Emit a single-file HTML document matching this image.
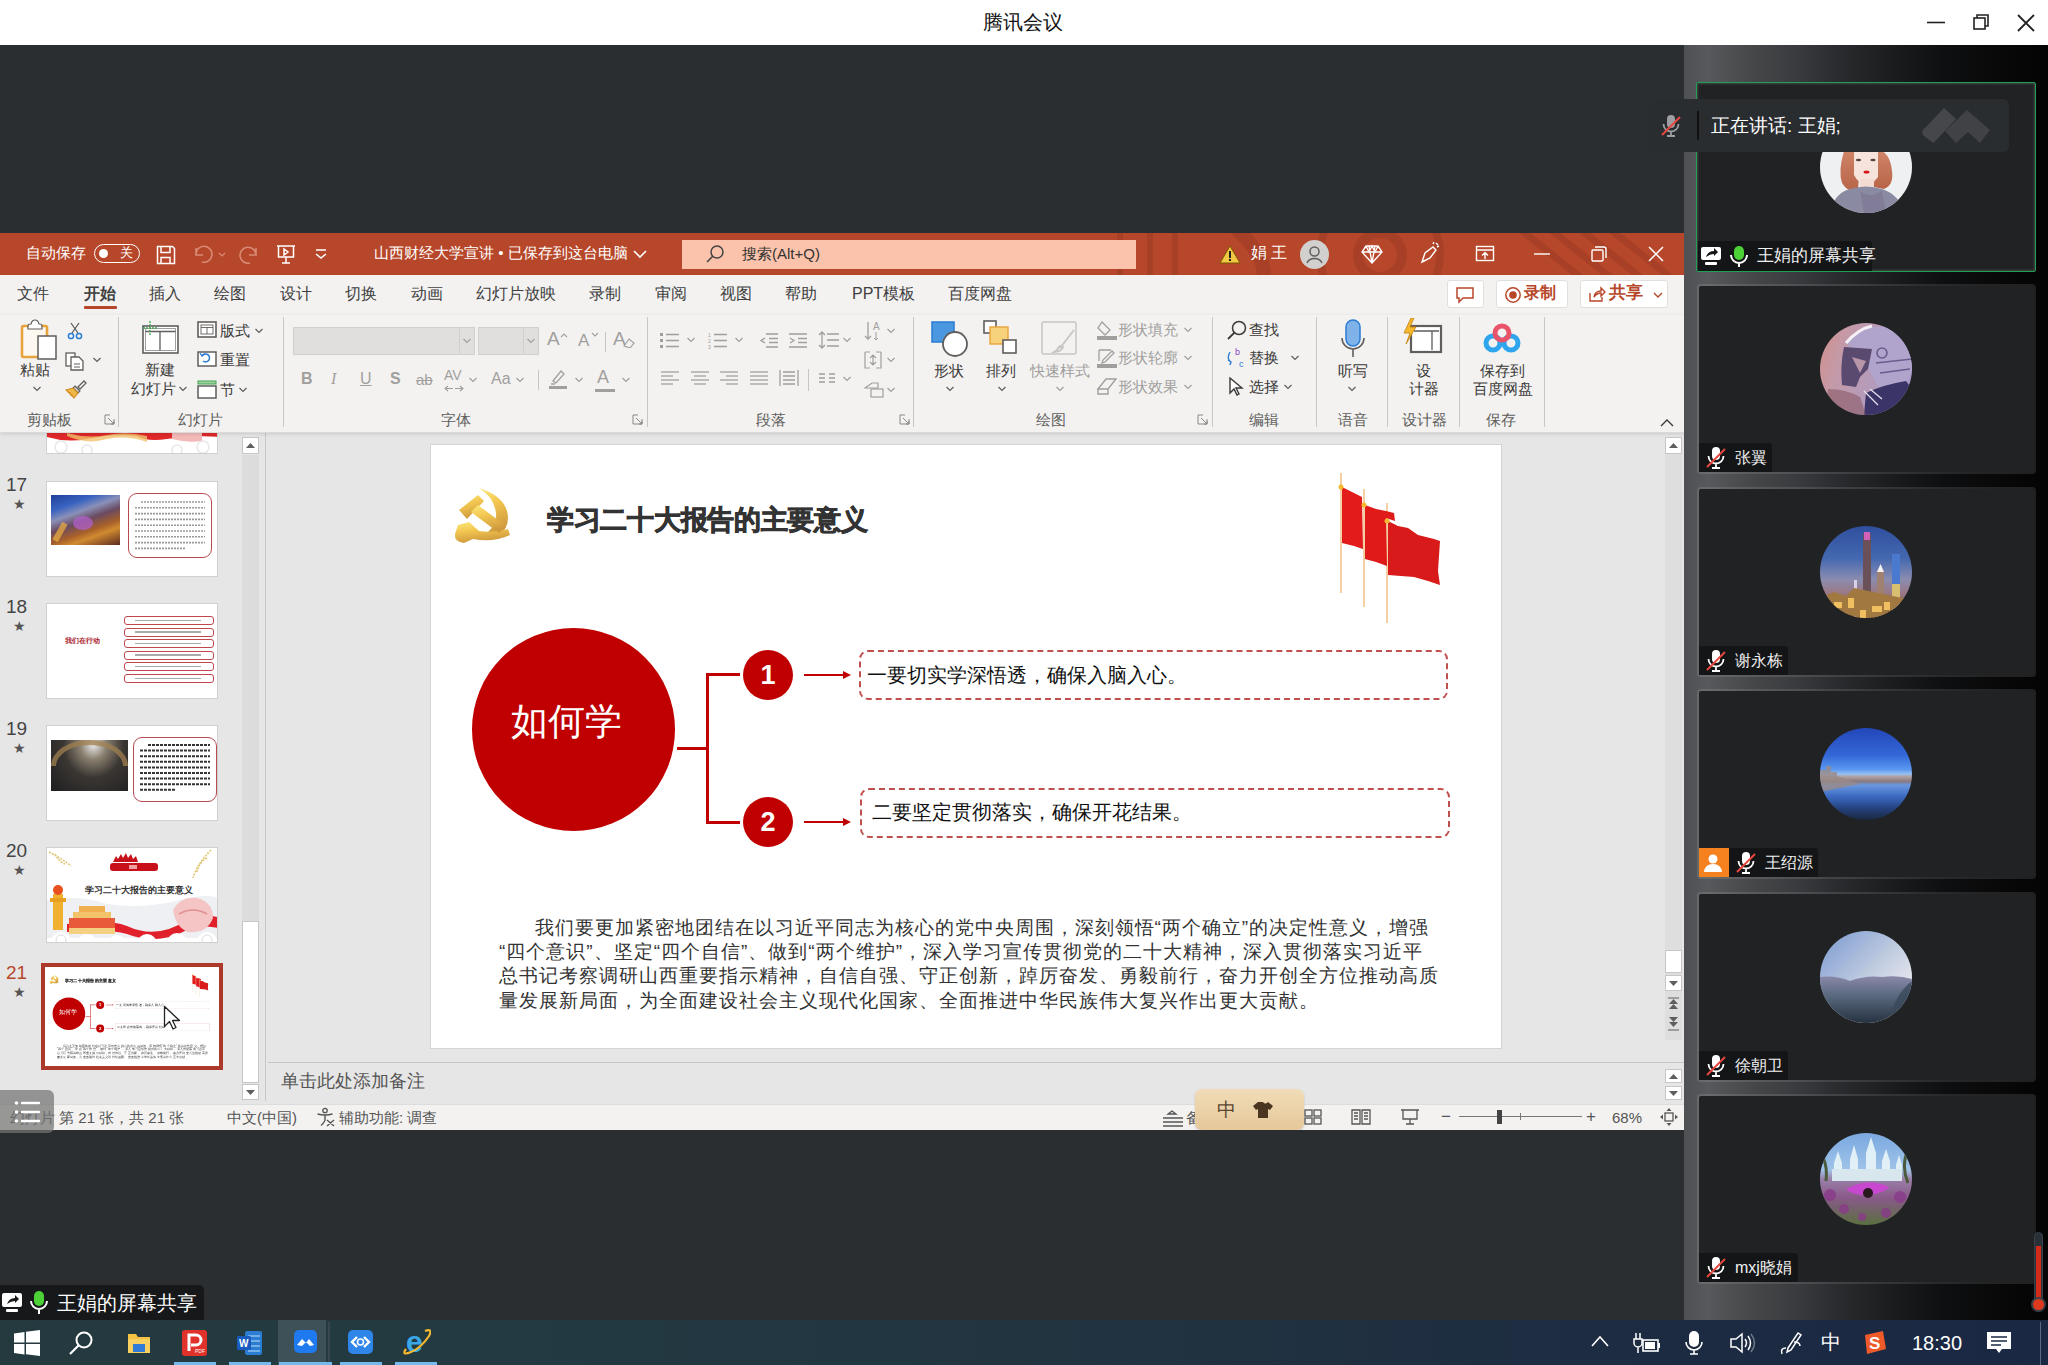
<!DOCTYPE html>
<html><head><meta charset="utf-8">
<style>
*{margin:0;padding:0;box-sizing:border-box}
html,body{width:2048px;height:1365px;overflow:hidden;background:#2b2e31;font-family:"Liberation Sans",sans-serif}
.a{position:absolute}
.t{position:absolute;white-space:nowrap;line-height:1}
#tbar{left:0;top:0;width:2048px;height:45px;background:#fff}
#ppt{left:0;top:233px;width:1684px;height:897px;background:#e6e6e6;overflow:hidden}
#ptitle{left:0;top:0;width:1684px;height:42px;background:#b7472a;overflow:hidden}
#ptabs{left:0;top:42px;width:1684px;height:40px;background:#f3f2f1}
#rib{left:0;top:82px;width:1684px;height:118px;background:#f3f2f1;border-bottom:1px solid #dcdad8;box-shadow:0 1px 4px rgba(0,0,0,.13);z-index:1}
#rpanel{left:1684px;top:45px;width:364px;height:1275px;background:linear-gradient(90deg,#4e5053 0px,#58595c 23px,#454749 68px,#3a3b3e 113px,#2b2d30 149px,#1f2022 194px,#0f1012 256px,#080808 319px,#040404 364px)}
#task{left:0;top:1320px;width:2048px;height:45px;background:linear-gradient(90deg,#243a3f 0%,#233a42 25%,#213340 55%,#1c2a42 85%,#1b2844 100%)}
</style></head><body>
<div id="tbar" class="a">
  <div class="t" style="left:983px;top:12px;font-size:20px;color:#111">腾讯会议</div>
  <svg class="a" style="left:1925px;top:12px" width="22" height="22"><line x1="2" y1="10.5" x2="20" y2="10.5" stroke="#222" stroke-width="1.6"/></svg>
  <svg class="a" style="left:1970px;top:12px" width="22" height="22"><rect x="4" y="6" width="11" height="11" fill="none" stroke="#222" stroke-width="1.6"/><path d="M7 6V3h11v11h-3" fill="none" stroke="#222" stroke-width="1.6"/></svg>
  <svg class="a" style="left:2015px;top:12px" width="22" height="22"><path d="M3 3L19 19M19 3L3 19" stroke="#222" stroke-width="1.8"/></svg>
</div>
<div id="ppt" class="a">
  <div id="ptitle" class="a">
    <svg class="a" style="left:1080px;top:0" width="604" height="42">
      <g fill="none" stroke="#9b3a22" stroke-opacity="0.55">
        <circle cx="300" cy="22" r="22" stroke-width="10"/>
        <circle cx="300" cy="22" r="60" stroke-width="8"/>
        <path d="M150 -10 Q230 60 120 80" stroke-width="14"/>
        <path d="M420 -20 L520 60 M450 -20 L550 60 M480 -20 L580 60 M510 -20 L610 60" stroke-width="7"/>
        <path d="M40 -10 L40 50 M70 -10 L70 50 M95 -10 L95 50" stroke-width="6"/>
      </g>
    </svg>
    <div class="t" style="left:26px;top:12px;font-size:15px;color:#fff">自动保存</div>
    <div class="a" style="left:94px;top:11px;width:46px;height:19px;border:1.5px solid #fff;border-radius:10px"></div>
    <div class="a" style="left:99px;top:16px;width:9px;height:9px;border-radius:50%;background:#fff"></div>
    <div class="t" style="left:120px;top:13px;font-size:13px;color:#fff">关</div>
    <svg class="a" style="left:156px;top:12px" width="20" height="20"><path d="M1.5 1.5h15l2 2v15h-17z M5 1.5v6h9v-6 M5 18.5v-6h9v6" fill="none" stroke="#fff" stroke-width="1.5"/></svg>
    <svg class="a" style="left:192px;top:11px" width="36" height="22"><path d="M4 4v7h7 M4 11 A8 8 0 1 1 10 18" fill="none" stroke="#d98a75" stroke-width="1.6"/><path d="M27 9l3 3 3-3" fill="none" stroke="#d98a75" stroke-width="1.2"/></svg>
    <svg class="a" style="left:238px;top:11px" width="24" height="22"><path d="M18 4v7h-7 M18 11 A8 8 0 1 0 12 19" fill="none" stroke="#d98a75" stroke-width="1.6"/></svg>
    <svg class="a" style="left:276px;top:11px" width="20" height="20"><path d="M1 2h18 M2.5 2v11h15V2 M10 13v6 M6 19h8 M8 5l4 3-4 3z" fill="none" stroke="#fff" stroke-width="1.5"/></svg>
    <svg class="a" style="left:314px;top:14px" width="14" height="14"><path d="M2 3h10 M2 7l5 4 5-4" fill="none" stroke="#fff" stroke-width="1.5"/></svg>
    <div class="t" style="left:374px;top:12px;font-size:15px;color:#fff">山西财经大学宣讲 • 已保存到这台电脑</div>
    <svg class="a" style="left:632px;top:14px" width="16" height="14"><path d="M2 4l6 6 6-6" fill="none" stroke="#fff" stroke-width="1.6"/></svg>
    <div class="a" style="left:682px;top:7px;width:454px;height:29px;background:#fbc3ab"></div>
    <svg class="a" style="left:704px;top:10px" width="22" height="22"><circle cx="13" cy="9" r="6" fill="none" stroke="#444" stroke-width="1.5"/><path d="M9 13L3 19" stroke="#444" stroke-width="1.6"/></svg>
    <div class="t" style="left:742px;top:13px;font-size:15px;color:#333">搜索(Alt+Q)</div>
    <svg class="a" style="left:1219px;top:11px" width="22" height="20"><path d="M11 2L21 19H1z" fill="#f2c744" stroke="#7a5a00" stroke-width="1"/><rect x="10" y="7" width="2" height="7" fill="#222"/><rect x="10" y="15" width="2" height="2" fill="#222"/></svg>
    <div class="t" style="left:1251px;top:12px;font-size:16px;color:#fff">娟 王</div>
    <div class="a" style="left:1300px;top:7px;width:29px;height:29px;border-radius:50%;background:#d2d0ce"></div>
    <svg class="a" style="left:1303px;top:10px" width="23" height="23"><circle cx="11.5" cy="8.5" r="4.5" fill="none" stroke="#605e5c" stroke-width="1.5"/><path d="M4 20 A8 7 0 0 1 19 20" fill="none" stroke="#605e5c" stroke-width="1.5"/></svg>
    <svg class="a" style="left:1361px;top:11px" width="22" height="20"><path d="M5 2h12l4 6-10 11L1 8z M1 8h20 M8 2L11 19 M14 2L11 19 M5 2l3 6 3-6 3 6 3-6" fill="none" stroke="#fff" stroke-width="1.4"/></svg>
    <svg class="a" style="left:1418px;top:9px" width="24" height="24"><path d="M4 20l3-9 8-6 3 3-6 8z M4 20l4-2 M15 2l1-2 M19 5l2-1 M18 1l2 2" fill="none" stroke="#fff" stroke-width="1.4"/></svg>
    <svg class="a" style="left:1475px;top:12px" width="20" height="18"><rect x="1.5" y="1.5" width="17" height="14" fill="none" stroke="#fff" stroke-width="1.4"/><path d="M1.5 5h17 M10 14V8 M7 10.5l3-3 3 3" fill="none" stroke="#fff" stroke-width="1.4"/></svg>
    <svg class="a" style="left:1532px;top:12px" width="20" height="18"><line x1="2" y1="9" x2="18" y2="9" stroke="#fff" stroke-width="1.4"/></svg>
    <svg class="a" style="left:1589px;top:12px" width="20" height="18"><rect x="3" y="5" width="11" height="11" rx="1" fill="none" stroke="#fff" stroke-width="1.4"/><path d="M6 2h9a2 2 0 0 1 2 2v9" fill="none" stroke="#fff" stroke-width="1.4"/></svg>
    <svg class="a" style="left:1646px;top:12px" width="20" height="18"><path d="M3 2l14 14M17 2L3 16" stroke="#fff" stroke-width="1.5"/></svg>
  </div>
  <div id="ptabs" class="a">
    <div class="t" style="left:17px;top:11px;font-size:16px;color:#404040;">文件</div>
    <div class="t" style="left:84px;top:11px;font-size:16px;color:#404040;font-weight:bold;">开始</div>
    <div class="t" style="left:149px;top:11px;font-size:16px;color:#404040;">插入</div>
    <div class="t" style="left:214px;top:11px;font-size:16px;color:#404040;">绘图</div>
    <div class="t" style="left:280px;top:11px;font-size:16px;color:#404040;">设计</div>
    <div class="t" style="left:345px;top:11px;font-size:16px;color:#404040;">切换</div>
    <div class="t" style="left:411px;top:11px;font-size:16px;color:#404040;">动画</div>
    <div class="t" style="left:476px;top:11px;font-size:16px;color:#404040;">幻灯片放映</div>
    <div class="t" style="left:589px;top:11px;font-size:16px;color:#404040;">录制</div>
    <div class="t" style="left:655px;top:11px;font-size:16px;color:#404040;">审阅</div>
    <div class="t" style="left:720px;top:11px;font-size:16px;color:#404040;">视图</div>
    <div class="t" style="left:785px;top:11px;font-size:16px;color:#404040;">帮助</div>
    <div class="t" style="left:852px;top:11px;font-size:16px;color:#404040;">PPT模板</div>
    <div class="t" style="left:948px;top:11px;font-size:16px;color:#404040;">百度网盘</div>
    <div class="a" style="left:84px;top:31px;width:33px;height:3px;background:#b7472a;border-radius:1px"></div>
    <div class="a" style="left:1447px;top:5px;width:37px;height:28px;background:#fff;border:1px solid #e1dfdd;border-radius:3px"></div>
    <svg class="a" style="left:1455px;top:11px" width="20" height="18"><path d="M2 2h16v10H8l-4 4v-4H2z" fill="none" stroke="#b7472a" stroke-width="1.5"/></svg>
    <div class="a" style="left:1496px;top:5px;width:72px;height:28px;background:#fff;border:1px solid #e1dfdd;border-radius:3px"></div>
    <svg class="a" style="left:1504px;top:11px" width="18" height="18"><circle cx="9" cy="9" r="7.2" fill="none" stroke="#b7472a" stroke-width="1.5"/><circle cx="9" cy="9" r="3.8" fill="#b7472a"/></svg>
    <div class="t" style="left:1524px;top:10px;font-size:16px;color:#b7472a;font-weight:bold">录制</div>
    <div class="a" style="left:1580px;top:5px;width:88px;height:28px;background:#fff;border:1px solid #e1dfdd;border-radius:3px"></div>
    <svg class="a" style="left:1588px;top:10px" width="18" height="18"><path d="M2 8v8h12v-4 M6 12 Q7 6 13 6 V3 l4 4-4 4 V8 Q9 8 6 12z" fill="none" stroke="#b7472a" stroke-width="1.4"/></svg>
    <div class="t" style="left:1609px;top:9px;font-size:17px;color:#b7472a;font-weight:bold">共享</div>
    <svg class="a" style="left:1652px;top:15px" width="12" height="10"><path d="M2 3l4 4 4-4" fill="none" stroke="#b7472a" stroke-width="1.4"/></svg>
  </div>
  <div id="rib" class="a">
    <div class="a" style="left:118px;top:2px;width:1px;height:110px;background:#c8c6c4"></div>
    <div class="a" style="left:283px;top:2px;width:1px;height:110px;background:#c8c6c4"></div>
    <div class="a" style="left:647px;top:2px;width:1px;height:110px;background:#c8c6c4"></div>
    <div class="a" style="left:913px;top:2px;width:1px;height:110px;background:#c8c6c4"></div>
    <div class="a" style="left:1212px;top:2px;width:1px;height:110px;background:#c8c6c4"></div>
    <div class="a" style="left:1316px;top:2px;width:1px;height:110px;background:#c8c6c4"></div>
    <div class="a" style="left:1387px;top:2px;width:1px;height:110px;background:#c8c6c4"></div>
    <div class="a" style="left:1459px;top:2px;width:1px;height:110px;background:#c8c6c4"></div>
    <div class="a" style="left:1544px;top:2px;width:1px;height:110px;background:#c8c6c4"></div>
    <div class="t" style="left:27px;top:96.5px;font-size:15px;color:#605e5c;">剪贴板</div>
    <div class="t" style="left:178px;top:96.5px;font-size:15px;color:#605e5c;">幻灯片</div>
    <div class="t" style="left:441px;top:96.5px;font-size:15px;color:#605e5c;">字体</div>
    <div class="t" style="left:756px;top:96.5px;font-size:15px;color:#605e5c;">段落</div>
    <div class="t" style="left:1036px;top:96.5px;font-size:15px;color:#605e5c;">绘图</div>
    <div class="t" style="left:1249px;top:96.5px;font-size:15px;color:#605e5c;">编辑</div>
    <div class="t" style="left:1338px;top:96.5px;font-size:15px;color:#605e5c;">语音</div>
    <div class="t" style="left:1402px;top:96.5px;font-size:15px;color:#605e5c;">设计器</div>
    <div class="t" style="left:1486px;top:96.5px;font-size:15px;color:#605e5c;">保存</div>
    <svg class="a" style="left:104px;top:99px" width="11" height="11"><path d="M1 1h5 M1 1v9h9V5 M4 4l6 6 M10 7v3H7" fill="none" stroke="#8a8886" stroke-width="1"/></svg>
    <svg class="a" style="left:632px;top:99px" width="11" height="11"><path d="M1 1h5 M1 1v9h9V5 M4 4l6 6 M10 7v3H7" fill="none" stroke="#8a8886" stroke-width="1"/></svg>
    <svg class="a" style="left:899px;top:99px" width="11" height="11"><path d="M1 1h5 M1 1v9h9V5 M4 4l6 6 M10 7v3H7" fill="none" stroke="#8a8886" stroke-width="1"/></svg>
    <svg class="a" style="left:1197px;top:99px" width="11" height="11"><path d="M1 1h5 M1 1v9h9V5 M4 4l6 6 M10 7v3H7" fill="none" stroke="#8a8886" stroke-width="1"/></svg>
<svg class="a" style="left:20px;top:4px" width="40" height="42"><rect x="2" y="7" width="25" height="31" rx="1.5" fill="#fdf8ef" stroke="#e8a33d" stroke-width="2.6"/><path d="M8 10V7 Q8 5 11 5 Q12 1 15 1 Q18 1 19 5 Q22 5 22 7v3z" fill="#fff" stroke="#605e5c" stroke-width="1.2"/><rect x="18" y="17" width="18" height="23" fill="#fff" stroke="#605e5c" stroke-width="1.5"/></svg>
    <div class="t" style="left:20px;top:46.5px;font-size:15px;color:#3b3a39;">粘贴</div>
    <svg class="a" style="left:32px;top:70px" width="10" height="8"><path d="M1.5 2l3.5 3.5 3.5-3.5" fill="none" stroke="#605e5c" stroke-width="1.2"/></svg>
    <svg class="a" style="left:66px;top:7px" width="18" height="18"><path d="M5 1l7 10 M13 1L6 11" stroke="#605e5c" stroke-width="1.3" fill="none"/><circle cx="5" cy="14" r="2.6" fill="none" stroke="#2b7cd3" stroke-width="1.5"/><circle cx="13" cy="14" r="2.6" fill="none" stroke="#2b7cd3" stroke-width="1.5"/></svg>
    <svg class="a" style="left:64px;top:36px" width="22" height="20"><rect x="2" y="2" width="9" height="13" fill="#fff" stroke="#605e5c" stroke-width="1.3"/><path d="M7 6h8l4 4v9H7z" fill="#fff" stroke="#605e5c" stroke-width="1.3"/><path d="M10 13h6 M10 16h6" stroke="#605e5c" stroke-width="1"/></svg>
    <svg class="a" style="left:92px;top:41px" width="10" height="8"><path d="M1.5 2l3.5 3.5 3.5-3.5" fill="none" stroke="#605e5c" stroke-width="1.2"/></svg>
    <svg class="a" style="left:65px;top:63px" width="22" height="22"><path d="M13 9l6-6 2 2-6 6z" fill="#fff" stroke="#605e5c" stroke-width="1.3"/><path d="M10 8l5 5-2 2-5-5z" fill="#d0d0d0" stroke="#605e5c" stroke-width="1.1"/><path d="M8 10l5 5-4 5-8-8z" fill="#f0b849" stroke="#d08a1e" stroke-width="1.1"/><path d="M3 14l3 1 M5 17l3 0" stroke="#d08a1e" stroke-width="0.9"/></svg>
<svg class="a" style="left:139px;top:4px" width="42" height="38"><rect x="4" y="7" width="35" height="27" fill="#fff" stroke="#605e5c" stroke-width="1.6"/><rect x="6.5" y="9.5" width="30" height="22" fill="none" stroke="#8a8886" stroke-width="0.8"/><path d="M6.5 12.5h30 M21 12.5v19" stroke="#605e5c" stroke-width="1.3"/><path d="M4 9h14 M11 2v14" stroke="#3fa34d" stroke-width="1.3" stroke-dasharray="2 1"/></svg>
    <div class="t" style="left:145px;top:46.5px;font-size:15px;color:#3b3a39;">新建</div>
    <div class="t" style="left:131px;top:65.5px;font-size:15px;color:#3b3a39;">幻灯片</div>
    <svg class="a" style="left:178px;top:70px" width="10" height="8"><path d="M1.5 2l3.5 3.5 3.5-3.5" fill="none" stroke="#605e5c" stroke-width="1.2"/></svg>
    <svg class="a" style="left:197px;top:6px" width="20" height="18"><rect x="1" y="1" width="18" height="15" fill="#fff" stroke="#605e5c" stroke-width="1.6"/><rect x="4" y="4" width="12" height="9" fill="none" stroke="#605e5c" stroke-width="0.9"/><path d="M4 6.5h12 M10 6.5v6.5" stroke="#605e5c" stroke-width="0.9"/></svg>
    <div class="t" style="left:220px;top:7.5px;font-size:15px;color:#3b3a39;">版式</div>
    <svg class="a" style="left:254px;top:12px" width="10" height="8"><path d="M1.5 2l3.5 3.5 3.5-3.5" fill="none" stroke="#605e5c" stroke-width="1.2"/></svg>
    <svg class="a" style="left:197px;top:35px" width="20" height="18"><rect x="1" y="2" width="18" height="14" fill="#fff" stroke="#605e5c" stroke-width="1.5"/><path d="M5 6 A4 4 0 1 1 6 11" fill="none" stroke="#2b7cd3" stroke-width="1.5"/><path d="M3 3l2 3 3-2" fill="none" stroke="#2b7cd3" stroke-width="1.3"/></svg>
    <div class="t" style="left:220px;top:36.5px;font-size:15px;color:#3b3a39;">重置</div>
    <svg class="a" style="left:197px;top:65px" width="20" height="19"><rect x="1" y="1" width="18" height="3" fill="#9fd4a3" stroke="#3fa34d" stroke-width="1"/><rect x="1" y="6" width="18" height="12" fill="#fff" stroke="#605e5c" stroke-width="1.5"/></svg>
    <div class="t" style="left:220px;top:66.5px;font-size:15px;color:#3b3a39;">节</div>
    <svg class="a" style="left:238px;top:71px" width="10" height="8"><path d="M1.5 2l3.5 3.5 3.5-3.5" fill="none" stroke="#605e5c" stroke-width="1.2"/></svg>
    <div class="a" style="left:293px;top:12px;width:182px;height:28px;background:#e1dfdd;border:1px solid #d2d0ce"></div>
    <div class="a" style="left:459px;top:12px;width:1px;height:28px;background:#d2d0ce"></div>
    <svg class="a" style="left:462px;top:22px" width="10" height="8"><path d="M1.5 2l3.5 3.5 3.5-3.5" fill="none" stroke="#a19f9d" stroke-width="1.2"/></svg>
    <div class="a" style="left:478px;top:12px;width:61px;height:28px;background:#e1dfdd;border:1px solid #d2d0ce"></div>
    <div class="a" style="left:523px;top:12px;width:1px;height:28px;background:#d2d0ce"></div>
    <svg class="a" style="left:526px;top:22px" width="10" height="8"><path d="M1.5 2l3.5 3.5 3.5-3.5" fill="none" stroke="#a19f9d" stroke-width="1.2"/></svg>
    <div class="t" style="left:547px;top:13.5px;font-size:19px;color:#a19f9d;">A</div>
    <svg class="a" style="left:560px;top:17px" width="8" height="6"><path d="M1 5l3-3 3 3" fill="none" stroke="#a19f9d" stroke-width="1.1"/></svg>
    <div class="t" style="left:578px;top:16.5px;font-size:17px;color:#a19f9d;">A</div>
    <svg class="a" style="left:591px;top:17px" width="8" height="6"><path d="M1 1l3 3 3-3" fill="none" stroke="#a19f9d" stroke-width="1.1"/></svg>
    <div class="a" style="left:605px;top:17px;width:1px;height:20px;background:#c8c6c4"></div>
    <div class="t" style="left:613px;top:13.5px;font-size:19px;color:#a19f9d;">A</div>
    <svg class="a" style="left:622px;top:21px" width="14" height="12"><path d="M2 10l5-7 5 4-4 5z" fill="none" stroke="#a19f9d" stroke-width="1.2"/></svg>
    <div class="t" style="left:301px;top:56.0px;font-size:16px;color:#a19f9d;font-weight:bold">B</div>
    <div class="t" style="left:331px;top:56.0px;font-size:16px;color:#a19f9d;font-style:italic;font-family:Liberation Serif">I</div>
    <div class="t" style="left:360px;top:56.0px;font-size:16px;color:#a19f9d;text-decoration:underline">U</div>
    <div class="t" style="left:390px;top:56.0px;font-size:16px;color:#a19f9d;font-weight:bold">S</div>
    <div class="t" style="left:416px;top:56.5px;font-size:15px;color:#a19f9d;text-decoration:line-through">ab</div>
    <div class="t" style="left:444px;top:53.0px;font-size:14px;color:#a19f9d;">AV</div>
    <svg class="a" style="left:444px;top:70px" width="20" height="7"><path d="M1 3.5h18 M4 1l-3 2.5 3 2.5 M16 1l3 2.5-3 2.5" fill="none" stroke="#a19f9d" stroke-width="1.1"/><path d="M10 0v7" stroke="#f3f2f1" stroke-width="2"/></svg>
    <svg class="a" style="left:468px;top:61px" width="10" height="8"><path d="M1.5 2l3.5 3.5 3.5-3.5" fill="none" stroke="#a19f9d" stroke-width="1.2"/></svg>
    <div class="t" style="left:491px;top:56.0px;font-size:16px;color:#a19f9d;">Aa</div>
    <svg class="a" style="left:515px;top:61px" width="10" height="8"><path d="M1.5 2l3.5 3.5 3.5-3.5" fill="none" stroke="#a19f9d" stroke-width="1.2"/></svg>
    <div class="a" style="left:538px;top:55px;width:1px;height:20px;background:#c8c6c4"></div>
    <svg class="a" style="left:548px;top:53px" width="20" height="22"><path d="M5 13l8-10 3 3-8 9z M3 16h4" fill="none" stroke="#a19f9d" stroke-width="1.3"/><rect x="1" y="18" width="18" height="3" fill="#a19f9d"/></svg>
    <svg class="a" style="left:574px;top:61px" width="10" height="8"><path d="M1.5 2l3.5 3.5 3.5-3.5" fill="none" stroke="#a19f9d" stroke-width="1.2"/></svg>
    <div class="t" style="left:597px;top:53.0px;font-size:18px;color:#a19f9d;">A</div>
    <div class="a" style="left:595px;top:74px;width:20px;height:3px;background:#a19f9d"></div>
    <svg class="a" style="left:621px;top:61px" width="10" height="8"><path d="M1.5 2l3.5 3.5 3.5-3.5" fill="none" stroke="#a19f9d" stroke-width="1.2"/></svg>
    <svg class="a" style="left:660px;top:17px" width="20" height="16"><rect x="0" y="1" width="3" height="3" fill="#a19f9d"/><rect x="0" y="7" width="3" height="3" fill="#a19f9d"/><rect x="0" y="13" width="3" height="3" fill="#a19f9d"/><path d="M6 2.5h13 M6 8.5h13 M6 14.5h13" stroke="#a19f9d" stroke-width="1.3"/></svg>
    <svg class="a" style="left:686px;top:21px" width="10" height="8"><path d="M1.5 2l3.5 3.5 3.5-3.5" fill="none" stroke="#a19f9d" stroke-width="1.2"/></svg>
    <svg class="a" style="left:708px;top:17px" width="20" height="17"><text x="0" y="5" font-size="5" fill="#a19f9d">1</text><text x="0" y="11" font-size="5" fill="#a19f9d">2</text><text x="0" y="17" font-size="5" fill="#a19f9d">3</text><path d="M6 2.5h13 M6 8.5h13 M6 14.5h13" stroke="#a19f9d" stroke-width="1.3"/></svg>
    <svg class="a" style="left:734px;top:21px" width="10" height="8"><path d="M1.5 2l3.5 3.5 3.5-3.5" fill="none" stroke="#a19f9d" stroke-width="1.2"/></svg>
    <svg class="a" style="left:759px;top:17px" width="20" height="17"><path d="M7 2h12 M10 6.5h9 M10 10.5h9 M7 15h12 M6 6l-4 2.5 4 2.5" fill="none" stroke="#a19f9d" stroke-width="1.3"/></svg>
    <svg class="a" style="left:788px;top:17px" width="20" height="17"><path d="M1 2h18 M10 6.5h9 M10 10.5h9 M1 15h18 M2 6l4 2.5-4 2.5" fill="none" stroke="#a19f9d" stroke-width="1.3"/></svg>
    <svg class="a" style="left:818px;top:16px" width="22" height="18"><path d="M9 3h12 M9 9h12 M9 15h12 M4 1v16 M1 4l3-3 3 3 M1 14l3 3 3-3" fill="none" stroke="#a19f9d" stroke-width="1.3"/></svg>
    <svg class="a" style="left:842px;top:21px" width="10" height="8"><path d="M1.5 2l3.5 3.5 3.5-3.5" fill="none" stroke="#a19f9d" stroke-width="1.2"/></svg>
    <svg class="a" style="left:864px;top:5px" width="18" height="22"><path d="M4 2v17 M1 16l3 3 3-3" fill="none" stroke="#a19f9d" stroke-width="1.3"/><text x="9" y="10" font-size="10" fill="#a19f9d">A</text><path d="M12 12v8 M10 18l2 2 2-2" fill="none" stroke="#a19f9d" stroke-width="1"/></svg>
    <svg class="a" style="left:886px;top:12px" width="10" height="8"><path d="M1.5 2l3.5 3.5 3.5-3.5" fill="none" stroke="#a19f9d" stroke-width="1.2"/></svg>
    <svg class="a" style="left:864px;top:36px" width="18" height="18"><path d="M1 1h5 M1 1v16h5 M17 1h-5 M17 1v16h-5 M9 4v10 M6 7l3-3 3 3 M6 11l3 3 3-3" fill="none" stroke="#a19f9d" stroke-width="1.2"/></svg>
    <svg class="a" style="left:886px;top:41px" width="10" height="8"><path d="M1.5 2l3.5 3.5 3.5-3.5" fill="none" stroke="#a19f9d" stroke-width="1.2"/></svg>
    <svg class="a" style="left:864px;top:67px" width="20" height="16"><path d="M1 6l7-5h6v5z" fill="none" stroke="#a19f9d" stroke-width="1.2"/><rect x="7" y="7" width="12" height="8" fill="none" stroke="#a19f9d" stroke-width="1.2"/></svg>
    <svg class="a" style="left:886px;top:71px" width="10" height="8"><path d="M1.5 2l3.5 3.5 3.5-3.5" fill="none" stroke="#a19f9d" stroke-width="1.2"/></svg>
    <svg class="a" style="left:661.0px;top:56px" width="18" height="18"><line x1="0" y1="1" x2="18" y2="1" stroke="#a19f9d" stroke-width="1.3"/><line x1="0" y1="5" x2="12" y2="5" stroke="#a19f9d" stroke-width="1.3"/><line x1="0" y1="9" x2="18" y2="9" stroke="#a19f9d" stroke-width="1.3"/><line x1="0" y1="13" x2="12" y2="13" stroke="#a19f9d" stroke-width="1.3"/></svg>
    <svg class="a" style="left:690.5px;top:56px" width="18" height="18"><line x1="0" y1="1" x2="18" y2="1" stroke="#a19f9d" stroke-width="1.3"/><line x1="3" y1="5" x2="15" y2="5" stroke="#a19f9d" stroke-width="1.3"/><line x1="0" y1="9" x2="18" y2="9" stroke="#a19f9d" stroke-width="1.3"/><line x1="3" y1="13" x2="15" y2="13" stroke="#a19f9d" stroke-width="1.3"/></svg>
    <svg class="a" style="left:720.0px;top:56px" width="18" height="18"><line x1="0" y1="1" x2="18" y2="1" stroke="#a19f9d" stroke-width="1.3"/><line x1="6" y1="5" x2="18" y2="5" stroke="#a19f9d" stroke-width="1.3"/><line x1="0" y1="9" x2="18" y2="9" stroke="#a19f9d" stroke-width="1.3"/><line x1="6" y1="13" x2="18" y2="13" stroke="#a19f9d" stroke-width="1.3"/></svg>
    <svg class="a" style="left:749.5px;top:56px" width="18" height="18"><line x1="0" y1="1" x2="18" y2="1" stroke="#a19f9d" stroke-width="1.3"/><line x1="0" y1="5" x2="18" y2="5" stroke="#a19f9d" stroke-width="1.3"/><line x1="0" y1="9" x2="18" y2="9" stroke="#a19f9d" stroke-width="1.3"/><line x1="0" y1="13" x2="18" y2="13" stroke="#a19f9d" stroke-width="1.3"/></svg>
    <svg class="a" style="left:779px;top:54px" width="20" height="18"><path d="M1 1v16 M19 1v16 M4 3h12 M4 7h12 M4 11h12 M4 15h12" fill="none" stroke="#a19f9d" stroke-width="1.3"/></svg>
    <div class="a" style="left:808px;top:54px;width:1px;height:22px;background:#c8c6c4"></div>
    <svg class="a" style="left:818px;top:57px" width="18" height="12"><path d="M1 2h6 M1 6h6 M1 10h6 M11 2h6 M11 6h6 M11 10h6" stroke="#a19f9d" stroke-width="1.3"/></svg>
    <svg class="a" style="left:842px;top:60px" width="10" height="8"><path d="M1.5 2l3.5 3.5 3.5-3.5" fill="none" stroke="#a19f9d" stroke-width="1.2"/></svg>
    <svg class="a" style="left:930px;top:4px" width="40" height="40"><rect x="2" y="3" width="22" height="20" fill="#4b97e0" stroke="#2b7cd3" stroke-width="1.5"/><circle cx="25" cy="25" r="12" fill="#fff" stroke="#605e5c" stroke-width="1.8"/></svg>
    <div class="t" style="left:934px;top:47.5px;font-size:15px;color:#3b3a39;">形状</div>
    <svg class="a" style="left:945px;top:70px" width="10" height="8"><path d="M1.5 2l3.5 3.5 3.5-3.5" fill="none" stroke="#605e5c" stroke-width="1.2"/></svg>
    <svg class="a" style="left:982px;top:4px" width="38" height="40"><rect x="2" y="2" width="12" height="12" fill="#fff" stroke="#605e5c" stroke-width="1.6"/><rect x="8" y="8" width="18" height="17" fill="#f6d27a" stroke="#e8a33d" stroke-width="1.4"/><rect x="21" y="21" width="13" height="13" fill="#fff" stroke="#605e5c" stroke-width="1.6"/></svg>
    <div class="t" style="left:986px;top:47.5px;font-size:15px;color:#3b3a39;">排列</div>
    <svg class="a" style="left:997px;top:70px" width="10" height="8"><path d="M1.5 2l3.5 3.5 3.5-3.5" fill="none" stroke="#605e5c" stroke-width="1.2"/></svg>
    <svg class="a" style="left:1040px;top:5px" width="40" height="38"><rect x="2" y="2" width="34" height="32" rx="2" fill="#f3f2f1" stroke="#c8c6c4" stroke-width="1.5"/><path d="M34 10L20 28 M17 30 q3-6 6-3 q-2 5-9 5z" fill="none" stroke="#c8c6c4" stroke-width="2"/></svg>
    <div class="t" style="left:1030px;top:47.5px;font-size:15px;color:#a19f9d;">快速样式</div>
    <svg class="a" style="left:1055px;top:70px" width="10" height="8"><path d="M1.5 2l3.5 3.5 3.5-3.5" fill="none" stroke="#a19f9d" stroke-width="1.2"/></svg>
    <svg class="a" style="left:1096px;top:4px" width="22" height="22"><path d="M6 3l8 8-5 5-7-7z" fill="none" stroke="#a19f9d" stroke-width="1.3"/><rect x="1" y="17" width="20" height="4" fill="#a19f9d"/></svg>
    <div class="t" style="left:1118px;top:6.5px;font-size:15px;color:#a19f9d;">形状填充</div>
    <svg class="a" style="left:1183px;top:11px" width="10" height="8"><path d="M1.5 2l3.5 3.5 3.5-3.5" fill="none" stroke="#a19f9d" stroke-width="1.2"/></svg>
    <svg class="a" style="left:1096px;top:32px" width="22" height="22"><path d="M3 3h12 M3 3v11 M16 4l-9 9-1 3 3-1 9-9z" fill="none" stroke="#a19f9d" stroke-width="1.3"/><rect x="1" y="17" width="20" height="4" fill="#a19f9d"/></svg>
    <div class="t" style="left:1118px;top:34.5px;font-size:15px;color:#a19f9d;">形状轮廓</div>
    <svg class="a" style="left:1183px;top:39px" width="10" height="8"><path d="M1.5 2l3.5 3.5 3.5-3.5" fill="none" stroke="#a19f9d" stroke-width="1.2"/></svg>
    <svg class="a" style="left:1096px;top:61px" width="22" height="20"><path d="M2 13l8-10h10l-8 10z M2 13v5h10v-5" fill="none" stroke="#a19f9d" stroke-width="1.4"/></svg>
    <div class="t" style="left:1118px;top:63.5px;font-size:15px;color:#a19f9d;">形状效果</div>
    <svg class="a" style="left:1183px;top:68px" width="10" height="8"><path d="M1.5 2l3.5 3.5 3.5-3.5" fill="none" stroke="#a19f9d" stroke-width="1.2"/></svg>
    <svg class="a" style="left:1226px;top:5px" width="22" height="20"><circle cx="13" cy="8" r="6.5" fill="none" stroke="#3b3a39" stroke-width="1.5"/><path d="M8.5 12.5L2 19" stroke="#3b3a39" stroke-width="1.8"/></svg>
    <div class="t" style="left:1249px;top:6.5px;font-size:15px;color:#3b3a39;">查找</div>
    <svg class="a" style="left:1224px;top:32px" width="24" height="22"><text x="11" y="8" font-size="9" fill="#8f3fc2">b</text><text x="15" y="20" font-size="9" fill="#2b7cd3">c</text><path d="M6 5 Q2 12 7 15 M4 13l3 2-1 3" fill="none" stroke="#2b7cd3" stroke-width="1.4"/></svg>
    <div class="t" style="left:1249px;top:34.5px;font-size:15px;color:#3b3a39;">替换</div>
    <svg class="a" style="left:1290px;top:39px" width="10" height="8"><path d="M1.5 2l3.5 3.5 3.5-3.5" fill="none" stroke="#605e5c" stroke-width="1.2"/></svg>
    <svg class="a" style="left:1228px;top:62px" width="18" height="20"><path d="M2 1v15l4-4 3 6 2-1-3-6h6z" fill="#fff" stroke="#3b3a39" stroke-width="1.4"/></svg>
    <div class="t" style="left:1249px;top:63.5px;font-size:15px;color:#3b3a39;">选择</div>
    <svg class="a" style="left:1283px;top:68px" width="10" height="8"><path d="M1.5 2l3.5 3.5 3.5-3.5" fill="none" stroke="#605e5c" stroke-width="1.2"/></svg>
    <svg class="a" style="left:1340px;top:3px" width="26" height="42"><rect x="6" y="2" width="14" height="26" rx="7" fill="#7fb2e9" stroke="#2b7cd3" stroke-width="1.5"/><path d="M2 20 A11 11 0 0 0 24 20 M13 31v8" fill="none" stroke="#605e5c" stroke-width="1.6"/></svg>
    <div class="t" style="left:1338px;top:47.5px;font-size:15px;color:#3b3a39;">听写</div>
    <svg class="a" style="left:1347px;top:70px" width="10" height="8"><path d="M1.5 2l3.5 3.5 3.5-3.5" fill="none" stroke="#605e5c" stroke-width="1.2"/></svg>
    <svg class="a" style="left:1402px;top:3px" width="42" height="38"><rect x="9" y="8" width="30" height="26" fill="#fff" stroke="#605e5c" stroke-width="2.2"/><path d="M12 13h25 M30 13v19" stroke="#605e5c" stroke-width="1.3"/><path d="M9 0L2 15h6L4 26 14 9H8l4-9z" fill="#f5b82e" stroke="#c47e0e" stroke-width="0.8"/></svg>
    <div class="t" style="left:1416px;top:47.5px;font-size:15px;color:#3b3a39;">设</div>
    <div class="t" style="left:1409px;top:65.5px;font-size:15px;color:#3b3a39;">计器</div>
<svg class="a" style="left:1482px;top:8px" width="40" height="32"><circle cx="11" cy="20" r="7" fill="none" stroke="#2fa5ee" stroke-width="5"/><circle cx="29" cy="20" r="7" fill="none" stroke="#2fa5ee" stroke-width="5"/><circle cx="20" cy="10" r="7" fill="none" stroke="#e9546b" stroke-width="5"/></svg>
    <div class="t" style="left:1480px;top:47.5px;font-size:15px;color:#3b3a39;">保存到</div>
    <div class="t" style="left:1473px;top:65.5px;font-size:15px;color:#3b3a39;">百度网盘</div>
    <svg class="a" style="left:1659px;top:103px" width="16" height="10"><path d="M2 8l6-6 6 6" fill="none" stroke="#3b3a39" stroke-width="1.4"/></svg>
  </div>
<div class="a" style="left:265px;top:200px;width:1px;height:668px;background:#c8c6c4"></div>
<div class="a" style="left:242px;top:204px;width:17px;height:17px;background:#fff;border:1px solid #c8c6c4"></div>
<svg class="a" style="left:242px;top:204px" width="17" height="17"><path d="M4 11l4.5-5 4.5 5z" fill="#605e5c"/></svg>
<div class="a" style="left:242px;top:222px;width:17px;height:466px;background:#dcdcdc"></div>
<div class="a" style="left:242px;top:688px;width:17px;height:162px;background:#fff;border:1px solid #c8c6c4"></div>
<div class="a" style="left:242px;top:851px;width:17px;height:16px;background:#fff;border:1px solid #c8c6c4"></div>
<svg class="a" style="left:242px;top:851px" width="17" height="16"><path d="M4 6l4.5 5 4.5-5z" fill="#605e5c"/></svg>
<div class="a" style="left:46px;top:200px;width:172px;height:21px;background:#fff;border:1px solid #d0d0d0;border-top:none;overflow:hidden">
<svg class="a" style="left:0;top:0" width="172" height="21"><path d="M0 0h172v4 Q150 2 120 6 Q100 9 90 3 Q70 0 40 6 Q20 10 0 4z" fill="#e0282a"/><path d="M20 3 Q40 12 60 6 Q80 2 100 9 L100 3 Q80 -2 60 2 Q40 6 20 0z" fill="#f2c36b" opacity=".8"/><path d="M125 0h30v8 Q140 10 125 6z" fill="#f3b9b9"/>
<g fill="none" stroke="#e8e8e8" stroke-width="1.5"><circle cx="14" cy="14" r="6"/><circle cx="156" cy="14" r="6"/><circle cx="40" cy="17" r="5"/><circle cx="130" cy="17" r="5"/></g></svg></div>
<div class="t" style="left:6px;top:242px;font-size:19px;color:#444">17</div>
<div class="t" style="left:13px;top:264px;font-size:14px;color:#555">★</div>
<div class="a" style="left:46px;top:248px;width:172px;height:96px;background:#fff;border:1px solid #d0d0d0;overflow:hidden">
<div class="a" style="left:4px;top:13px;width:69px;height:50px;background:linear-gradient(160deg,#1f3f9a 0%,#3a64c0 22%,#8a90b8 36%,#6a4a60 50%,#a8602a 66%,#d08a30 76%,#5a2a20 100%)"></div>
<div class="a" style="left:26px;top:34px;width:20px;height:14px;border-radius:50%;background:#b060c8;opacity:.75"></div><div class="a" style="left:10px;top:40px;width:6px;height:20px;background:#f0b040;opacity:.7;transform:rotate(30deg)"></div>
<div class="a" style="left:81px;top:11px;width:84px;height:65px;border:1.6px solid #b84a52;border-radius:9px"></div>
<svg class="a" style="left:88px;top:18px" width="72" height="52"><line x1="6" y1="2.0" x2="70" y2="2.0" stroke="#9a9a9a" stroke-width="1.6" stroke-dasharray="2 1"/><line x1="0" y1="7.8" x2="70" y2="7.8" stroke="#9a9a9a" stroke-width="1.6" stroke-dasharray="2 1"/><line x1="0" y1="13.6" x2="70" y2="13.6" stroke="#9a9a9a" stroke-width="1.6" stroke-dasharray="2 1"/><line x1="0" y1="19.4" x2="70" y2="19.4" stroke="#9a9a9a" stroke-width="1.6" stroke-dasharray="2 1"/><line x1="0" y1="25.2" x2="70" y2="25.2" stroke="#9a9a9a" stroke-width="1.6" stroke-dasharray="2 1"/><line x1="0" y1="31.0" x2="70" y2="31.0" stroke="#9a9a9a" stroke-width="1.6" stroke-dasharray="2 1"/><line x1="0" y1="36.8" x2="70" y2="36.8" stroke="#9a9a9a" stroke-width="1.6" stroke-dasharray="2 1"/><line x1="0" y1="42.6" x2="70" y2="42.6" stroke="#9a9a9a" stroke-width="1.6" stroke-dasharray="2 1"/><line x1="0" y1="48.4" x2="50" y2="48.4" stroke="#9a9a9a" stroke-width="1.6" stroke-dasharray="2 1"/></svg>
</div>
<div class="t" style="left:6px;top:364px;font-size:19px;color:#444">18</div>
<div class="t" style="left:13px;top:386px;font-size:14px;color:#555">★</div>
<div class="a" style="left:46px;top:370px;width:172px;height:96px;background:#fff;border:1px solid #d0d0d0;overflow:hidden">
<div class="t" style="left:18px;top:33px;font-size:7px;color:#a8202a;font-weight:bold">我们在行动</div><div class="a" style="left:77px;top:12.0px;width:90px;height:9px;border:1.6px solid #c0474e;border-radius:3px"><div class="a" style="left:10px;top:2.5px;width:66px;height:1.5px;background:#aaa"></div></div><div class="a" style="left:77px;top:23.6px;width:90px;height:9px;border:1.6px solid #c0474e;border-radius:3px"><div class="a" style="left:10px;top:2.5px;width:66px;height:1.5px;background:#aaa"></div></div><div class="a" style="left:77px;top:35.2px;width:90px;height:9px;border:1.6px solid #c0474e;border-radius:3px"><div class="a" style="left:10px;top:2.5px;width:66px;height:1.5px;background:#aaa"></div></div><div class="a" style="left:77px;top:46.8px;width:90px;height:9px;border:1.6px solid #c0474e;border-radius:3px"><div class="a" style="left:10px;top:2.5px;width:66px;height:1.5px;background:#aaa"></div></div><div class="a" style="left:77px;top:58.4px;width:90px;height:9px;border:1.6px solid #c0474e;border-radius:3px"><div class="a" style="left:10px;top:2.5px;width:66px;height:1.5px;background:#aaa"></div></div><div class="a" style="left:77px;top:70.0px;width:90px;height:9px;border:1.6px solid #c0474e;border-radius:3px"><div class="a" style="left:10px;top:2.5px;width:66px;height:1.5px;background:#aaa"></div></div>
</div>
<div class="t" style="left:6px;top:486px;font-size:19px;color:#444">19</div>
<div class="t" style="left:13px;top:508px;font-size:14px;color:#555">★</div>
<div class="a" style="left:46px;top:492px;width:172px;height:96px;background:#fff;border:1px solid #d0d0d0;overflow:hidden">
<div class="a" style="left:4px;top:14px;width:77px;height:51px;background:radial-gradient(ellipse at 55% 10%,#e8e8e8 0%,#8a8070 22%,#3a3632 50%,#1e1e20 100%)"></div>
<div class="a" style="left:4px;top:14px;width:77px;height:26px;border-radius:50% 50% 0 0/100% 100% 0 0;border:5px solid #a08050;border-bottom:none;opacity:.75"></div>
<div class="a" style="left:86px;top:11px;width:84px;height:65px;border:1.6px solid #b84a52;border-radius:9px"></div>
<svg class="a" style="left:93px;top:17px" width="72" height="54"><line x1="8" y1="2.0" x2="70" y2="2.0" stroke="#333" stroke-width="2" stroke-dasharray="3 1"/><line x1="0" y1="7.6" x2="70" y2="7.6" stroke="#333" stroke-width="2" stroke-dasharray="3 1"/><line x1="0" y1="13.2" x2="70" y2="13.2" stroke="#333" stroke-width="2" stroke-dasharray="3 1"/><line x1="0" y1="18.799999999999997" x2="70" y2="18.799999999999997" stroke="#333" stroke-width="2" stroke-dasharray="3 1"/><line x1="0" y1="24.4" x2="70" y2="24.4" stroke="#333" stroke-width="2" stroke-dasharray="3 1"/><line x1="0" y1="30.0" x2="70" y2="30.0" stroke="#333" stroke-width="2" stroke-dasharray="3 1"/><line x1="0" y1="35.599999999999994" x2="70" y2="35.599999999999994" stroke="#333" stroke-width="2" stroke-dasharray="3 1"/><line x1="0" y1="41.199999999999996" x2="70" y2="41.199999999999996" stroke="#333" stroke-width="2" stroke-dasharray="3 1"/><line x1="0" y1="46.8" x2="36" y2="46.8" stroke="#333" stroke-width="2" stroke-dasharray="3 1"/></svg>
</div>
<div class="t" style="left:6px;top:608px;font-size:19px;color:#444">20</div>
<div class="t" style="left:13px;top:630px;font-size:14px;color:#555">★</div>
<div class="a" style="left:46px;top:614px;width:172px;height:96px;background:#fff;border:1px solid #d0d0d0;overflow:hidden">
<svg class="a" style="left:0;top:0" width="172" height="96">
<path d="M0 52 Q30 46 60 56 Q100 62 140 50 Q160 46 172 50 V90 H0z" fill="#eef0f4"/>
<path d="M66 14 l3 -6 2 3 3 -5 2 4 3 -5 2 5 3 -4 2 5 3 -3 2 6z" fill="#c8101a"/>
<rect x="63" y="15" width="48" height="8" rx="3" fill="#c8101a"/>
<rect x="82" y="17" width="8" height="4" fill="#f0a0a0"/>
<path d="M20 76 Q60 70 80 78 Q110 92 140 72 Q160 64 172 70 V80 Q150 76 140 82 Q110 98 80 86 Q60 80 20 84z" fill="#e0202a"/>
<rect x="22" y="70" width="46" height="10" fill="#e85a3a"/><rect x="26" y="64" width="38" height="6" fill="#f2c36b"/><rect x="32" y="58" width="26" height="6" fill="#f0b050"/><rect x="22" y="80" width="46" height="6" fill="#f5d080"/>
<rect x="6" y="46" width="10" height="36" fill="#f0b030"/><path d="M3 50 h16 v4 h-16z" fill="#e8a020"/><circle cx="11" cy="42" r="5" fill="#e85020"/>
<path d="M126 62 Q134 48 150 50 Q166 54 166 70 Q160 86 140 84 Q128 78 126 62z" fill="#f5c4c4"/><path d="M132 66 Q146 58 160 66" stroke="#e09090" stroke-width="1.5" fill="none"/>
<g fill="#fff"><circle cx="14" cy="94" r="10"/><circle cx="40" cy="96" r="10"/><circle cx="70" cy="96" r="9"/><circle cx="100" cy="96" r="10"/><circle cx="130" cy="95" r="10"/><circle cx="160" cy="94" r="10"/></g>
<g fill="none" stroke="#ddd" stroke-width="1"><circle cx="14" cy="92" r="5"/><circle cx="160" cy="92" r="5"/></g>
<path d="M2 4 Q14 10 24 18 M8 6 Q12 14 18 16 M164 2 Q150 16 146 30 M160 10 Q152 14 150 24" fill="none" stroke="#e0c878" stroke-width="1.6" stroke-dasharray="2 1.2"/>
</svg>
<div class="t" style="left:38px;top:37px;font-size:9.4px;font-weight:bold;color:#333">学习二十大报告的主要意义</div>
</div>
<div class="t" style="left:6px;top:730px;font-size:19px;color:#b7472a">21</div>
<div class="t" style="left:13px;top:752px;font-size:14px;color:#555">★</div>
<div class="a" style="left:41px;top:730px;width:182px;height:107px;border:4.5px solid #ab3a2c;background:#fff"></div>
<div class="a" style="left:46px;top:735px;width:172px;height:97px;overflow:hidden;background:#fff"><div class="a" style="left:0;top:0;width:1070px;height:603px;transform:scale(0.16075);transform-origin:0 0"><svg class="a" style="left:20px;top:40px" width="62" height="62" viewBox="0 0 62 62">
<defs><linearGradient id="gold2" x1="0" y1="0" x2="0.3" y2="1"><stop offset="0" stop-color="#fbe878"/><stop offset="0.45" stop-color="#f2c650"/><stop offset="1" stop-color="#cf9a3e"/></linearGradient></defs>
<g fill="url(#gold2)">
<path d="M28 3 Q56 12 57 32 Q57 44 48 50 L37 47 Q46 39 45 28 Q43 12 28 3 Z"/>
<path d="M7 40 L18 37 L28 46 Q42 48 57 44 L59 50 Q42 58 22 54 L13 58 Q3 57 4 49 Z"/>
<path d="M8 25 L27 10 L33 16 L16 34 Z"/>
<path d="M20 27 L27 20 L55 41 L48 48 Z"/>
</g></svg><div class="t" style="left:116px;top:62px;width:320.4px;text-align:justify;text-align-last:justify;font-size:27px;font-weight:bold;color:#3a3a3a;letter-spacing:-0.3px;-webkit-text-stroke:0.8px #333">学习二十大报告的主要意义</div><svg class="a" style="left:905px;top:26px" width="112" height="156" viewBox="0 0 112 156">
<g stroke="#f0c48a" stroke-width="1.6"><line x1="5" y1="2" x2="5" y2="122"/><line x1="28" y1="18" x2="28" y2="136"/><line x1="51" y1="32" x2="51" y2="152"/></g>
<path d="M6 16 L18 22 L26 26 L27 78 L18 75 L6 72 Z" fill="#e31b1b"/>
<path d="M29 34 L40 38 L50 40 L58 42 L59 50 L50 47 L51 95 L40 91 L29 88 Z" fill="#e01919"/>
<path d="M52 50 L62 55 L72 57 L82 64 L98 68 L104 70 L102 100 L104 114 L92 110 L78 106 L52 104 Z" fill="#d81a1a"/>
<g fill="#f5b82e"><circle cx="5" cy="16" r="2.5"/><circle cx="28" cy="34" r="2.5"/><circle cx="51" cy="50" r="2.5"/></g>
</svg><div class="a" style="left:41px;top:183px;width:203px;height:203px;border-radius:50%;background:#c00000"></div><div class="t" style="left:80px;top:258px;width:111px;text-align:justify;text-align-last:justify;font-size:37px;color:#fff">如何学</div><div class="a" style="left:246px;top:302px;width:31px;height:3px;background:#c00000"></div><div class="a" style="left:275px;top:228px;width:3px;height:151px;background:#c00000"></div><div class="a" style="left:275px;top:228px;width:34px;height:3px;background:#c00000"></div><div class="a" style="left:275px;top:376px;width:34px;height:3px;background:#c00000"></div><div class="a" style="left:312px;top:204.5px;width:50px;height:50px;border-radius:50%;background:#c00000"></div><div class="t" style="left:312px;width:50px;text-align:center;top:216.5px;font-size:27px;font-weight:bold;color:#fff">1</div><svg class="a" style="left:372px;top:223.5px" width="50" height="12"><line x1="1" y1="6" x2="42" y2="6" stroke="#c00000" stroke-width="2.2"/><path d="M40 2l8 4-8 4z" fill="#c00000"/></svg><div class="a" style="left:312px;top:352px;width:50px;height:50px;border-radius:50%;background:#c00000"></div><div class="t" style="left:312px;width:50px;text-align:center;top:364px;font-size:27px;font-weight:bold;color:#fff">2</div><svg class="a" style="left:372px;top:371px" width="50" height="12"><line x1="1" y1="6" x2="42" y2="6" stroke="#c00000" stroke-width="2.2"/><path d="M40 2l8 4-8 4z" fill="#c00000"/></svg><div class="a" style="left:428px;top:205px;width:589px;height:50px;border:2px dashed #c0504d;border-radius:9px"></div><div class="a" style="left:429px;top:343px;width:590px;height:50px;border:2px dashed #c0504d;border-radius:9px"></div><div class="t" style="left:436px;top:221px;width:320px;text-align:justify;text-align-last:justify;font-size:19.7px;color:#111">一要切实学深悟透，确保入脑入心。</div><div class="t" style="left:441px;top:358px;width:320px;text-align:justify;text-align-last:justify;font-size:19.7px;color:#111">二要坚定贯彻落实，确保开花结果。</div><div class="t pl" id="tpl0" style="left:103.5px;top:473px;width:894.7px;text-align:justify;text-align-last:justify;font-size:19px;color:#333;letter-spacing:1px">我们要更加紧密地团结在以习近平同志为核心的党中央周围，深刻领悟“两个确立”的决定性意义，增强</div><div class="t pl" id="tpl1" style="left:68px;top:497.3px;width:924px;text-align:justify;text-align-last:justify;font-size:19px;color:#333;letter-spacing:1px">“四个意识”、坚定“四个自信”、做到“两个维护”，深入学习宣传贯彻党的二十大精神，深入贯彻落实习近平</div><div class="t pl" id="tpl2" style="left:68px;top:521.2px;width:940px;text-align:justify;text-align-last:justify;font-size:19px;color:#333;letter-spacing:1px">总书记考察调研山西重要指示精神，自信自强、守正创新，踔厉奋发、勇毅前行，奋力开创全方位推动高质</div><div class="t pl" id="tpl3" style="left:68px;top:546px;width:820px;text-align:justify;text-align-last:justify;font-size:19px;color:#333;letter-spacing:1px">量发展新局面，为全面建设社会主义现代化国家、全面推进中华民族伟大复兴作出更大贡献。</div></div></div>
<svg class="a" style="left:163px;top:772px" width="18" height="26"><path d="M1.5 1.5v20l5-5 3.5 7.5 3-1.5-3.5-7h7z" fill="#fff" stroke="#222" stroke-width="1.3" stroke-linejoin="round"/></svg>
<div class="a" style="left:431px;top:212px;width:1070px;height:603px;background:#fff;box-shadow:0 0 0 1px #d4d4d4"><svg class="a" style="left:20px;top:40px" width="62" height="62" viewBox="0 0 62 62">
<defs><linearGradient id="gold" x1="0" y1="0" x2="0.3" y2="1"><stop offset="0" stop-color="#fbe878"/><stop offset="0.45" stop-color="#f2c650"/><stop offset="1" stop-color="#cf9a3e"/></linearGradient></defs>
<g fill="url(#gold)">
<path d="M28 3 Q56 12 57 32 Q57 44 48 50 L37 47 Q46 39 45 28 Q43 12 28 3 Z"/>
<path d="M7 40 L18 37 L28 46 Q42 48 57 44 L59 50 Q42 58 22 54 L13 58 Q3 57 4 49 Z"/>
<path d="M8 25 L27 10 L33 16 L16 34 Z"/>
<path d="M20 27 L27 20 L55 41 L48 48 Z"/>
</g></svg><div class="t" style="left:116px;top:62px;width:320.4px;text-align:justify;text-align-last:justify;font-size:27px;font-weight:bold;color:#3a3a3a;letter-spacing:-0.3px;-webkit-text-stroke:0.8px #333">学习二十大报告的主要意义</div><svg class="a" style="left:905px;top:26px" width="112" height="156" viewBox="0 0 112 156">
<g stroke="#f0c48a" stroke-width="1.6"><line x1="5" y1="2" x2="5" y2="122"/><line x1="28" y1="18" x2="28" y2="136"/><line x1="51" y1="32" x2="51" y2="152"/></g>
<path d="M6 16 L18 22 L26 26 L27 78 L18 75 L6 72 Z" fill="#e31b1b"/>
<path d="M29 34 L40 38 L50 40 L58 42 L59 50 L50 47 L51 95 L40 91 L29 88 Z" fill="#e01919"/>
<path d="M52 50 L62 55 L72 57 L82 64 L98 68 L104 70 L102 100 L104 114 L92 110 L78 106 L52 104 Z" fill="#d81a1a"/>
<g fill="#f5b82e"><circle cx="5" cy="16" r="2.5"/><circle cx="28" cy="34" r="2.5"/><circle cx="51" cy="50" r="2.5"/></g>
</svg><div class="a" style="left:41px;top:183px;width:203px;height:203px;border-radius:50%;background:#c00000"></div><div class="t" style="left:80px;top:258px;width:111px;text-align:justify;text-align-last:justify;font-size:37px;color:#fff">如何学</div><div class="a" style="left:246px;top:302px;width:31px;height:3px;background:#c00000"></div><div class="a" style="left:275px;top:228px;width:3px;height:151px;background:#c00000"></div><div class="a" style="left:275px;top:228px;width:34px;height:3px;background:#c00000"></div><div class="a" style="left:275px;top:376px;width:34px;height:3px;background:#c00000"></div><div class="a" style="left:312px;top:204.5px;width:50px;height:50px;border-radius:50%;background:#c00000"></div><div class="t" style="left:312px;width:50px;text-align:center;top:216.5px;font-size:27px;font-weight:bold;color:#fff">1</div><svg class="a" style="left:372px;top:223.5px" width="50" height="12"><line x1="1" y1="6" x2="42" y2="6" stroke="#c00000" stroke-width="2.2"/><path d="M40 2l8 4-8 4z" fill="#c00000"/></svg><div class="a" style="left:312px;top:352px;width:50px;height:50px;border-radius:50%;background:#c00000"></div><div class="t" style="left:312px;width:50px;text-align:center;top:364px;font-size:27px;font-weight:bold;color:#fff">2</div><svg class="a" style="left:372px;top:371px" width="50" height="12"><line x1="1" y1="6" x2="42" y2="6" stroke="#c00000" stroke-width="2.2"/><path d="M40 2l8 4-8 4z" fill="#c00000"/></svg><div class="a" style="left:428px;top:205px;width:589px;height:50px;border:2px dashed #c0504d;border-radius:9px"></div><div class="a" style="left:429px;top:343px;width:590px;height:50px;border:2px dashed #c0504d;border-radius:9px"></div><div class="t" style="left:436px;top:221px;width:320px;text-align:justify;text-align-last:justify;font-size:19.7px;color:#111">一要切实学深悟透，确保入脑入心。</div><div class="t" style="left:441px;top:358px;width:320px;text-align:justify;text-align-last:justify;font-size:19.7px;color:#111">二要坚定贯彻落实，确保开花结果。</div><div class="t pl" id="pl0" style="left:103.5px;top:473px;width:894.7px;text-align:justify;text-align-last:justify;font-size:19px;color:#333;letter-spacing:1px">我们要更加紧密地团结在以习近平同志为核心的党中央周围，深刻领悟“两个确立”的决定性意义，增强</div><div class="t pl" id="pl1" style="left:68px;top:497.3px;width:924px;text-align:justify;text-align-last:justify;font-size:19px;color:#333;letter-spacing:1px">“四个意识”、坚定“四个自信”、做到“两个维护”，深入学习宣传贯彻党的二十大精神，深入贯彻落实习近平</div><div class="t pl" id="pl2" style="left:68px;top:521.2px;width:940px;text-align:justify;text-align-last:justify;font-size:19px;color:#333;letter-spacing:1px">总书记考察调研山西重要指示精神，自信自强、守正创新，踔厉奋发、勇毅前行，奋力开创全方位推动高质</div><div class="t pl" id="pl3" style="left:68px;top:546px;width:820px;text-align:justify;text-align-last:justify;font-size:19px;color:#333;letter-spacing:1px">量发展新局面，为全面建设社会主义现代化国家、全面推进中华民族伟大复兴作出更大贡献。</div></div>
<div class="a" style="left:1665px;top:204px;width:17px;height:603px;background:#dedede"></div>
<div class="a" style="left:1665px;top:204px;width:17px;height:17px;background:#fff;border:1px solid #c8c6c4"></div>
<svg class="a" style="left:1665px;top:204px" width="17" height="17"><path d="M4 11l4.5-5 4.5 5z" fill="#605e5c"/></svg>
<div class="a" style="left:1665px;top:717px;width:17px;height:23px;background:#fff;border:1px solid #c8c6c4"></div>
<div class="a" style="left:1665px;top:742px;width:17px;height:16px;background:#fff;border:1px solid #c8c6c4"></div>
<svg class="a" style="left:1665px;top:742px" width="17" height="16"><path d="M4 6l4.5 5 4.5-5z" fill="#605e5c"/></svg>
<svg class="a" style="left:1665px;top:763px" width="17" height="36"><path d="M4 8l4.5-5 4.5 5z M4 13l4.5-5 4.5 5z M4 26l4.5 5 4.5-5z M4 21l4.5 5 4.5-5z" fill="#605e5c"/><path d="M3 2h11 M3 34h11" stroke="#605e5c" stroke-width="1.2"/></svg>
<div class="a" style="left:268px;top:829px;width:1416px;height:1px;background:#c8c6c4"></div>
<div class="t" style="left:281px;top:839px;font-size:18px;color:#555">单击此处添加备注</div>
<div class="a" style="left:1665px;top:836px;width:17px;height:14px;background:#fff;border:1px solid #c8c6c4"></div>
<svg class="a" style="left:1665px;top:836px" width="17" height="14"><path d="M4 10l4.5-5 4.5 5z" fill="#605e5c"/></svg>
<div class="a" style="left:1665px;top:853px;width:17px;height:14px;background:#fff;border:1px solid #c8c6c4"></div>
<svg class="a" style="left:1665px;top:853px" width="17" height="14"><path d="M4 5l4.5 5 4.5-5z" fill="#605e5c"/></svg>
<div class="a" style="left:0;top:871px;width:1684px;height:26px;background:#f3f2f1;border-top:1px solid #dcdcdc"></div>
<div class="t" style="left:10px;top:877px;font-size:15px;color:#555">幻灯片 第 21 张，共 21 张</div>
<div class="t" style="left:227px;top:877px;font-size:15px;color:#555">中文(中国)</div>
<svg class="a" style="left:316px;top:874px" width="20" height="20"><circle cx="9" cy="3.5" r="2.2" fill="none" stroke="#555" stroke-width="1.3"/><path d="M1.5 7 Q9 9 16.5 7 M9 8.5v5 Q7 17 5 18.5 M11 13l7 6 M18 13l-7 6" fill="none" stroke="#555" stroke-width="1.4"/></svg>
<div class="t" style="left:339px;top:877px;font-size:15px;color:#555">辅助功能: 调查</div>
<svg class="a" style="left:1162px;top:876px" width="22" height="18"><path d="M10 2l-4 3h8z M1 9h20 M1 13h20 M1 17h20" fill="none" stroke="#555" stroke-width="1.3"/></svg>
<div class="t" style="left:1186px;top:877px;font-size:15px;color:#555">备</div>
<svg class="a" style="left:1303px;top:875px" width="20" height="18"><rect x="2" y="2" width="7" height="6" fill="none" stroke="#555" stroke-width="1.3"/><rect x="11" y="2" width="7" height="6" fill="none" stroke="#555" stroke-width="1.3"/><rect x="2" y="10" width="7" height="6" fill="none" stroke="#555" stroke-width="1.3"/><rect x="11" y="10" width="7" height="6" fill="none" stroke="#555" stroke-width="1.3"/></svg>
<svg class="a" style="left:1351px;top:875px" width="20" height="18"><path d="M1 2h8v14H1z M11 2h8v14h-8z M3 5h4 M3 8h4 M3 11h4 M13 5h4 M13 8h4 M13 11h4" fill="none" stroke="#555" stroke-width="1.3"/></svg>
<svg class="a" style="left:1400px;top:875px" width="20" height="18"><path d="M1 2h18 M3 2v9h14V2 M10 11v5 M6 16h8" fill="none" stroke="#555" stroke-width="1.3"/></svg>
<div class="t" style="left:1441px;top:875px;font-size:17px;color:#555">−</div>
<div class="a" style="left:1459px;top:883px;width:123px;height:1px;background:#777"></div>
<div class="a" style="left:1497px;top:877px;width:5px;height:14px;background:#444"></div>
<div class="a" style="left:1520px;top:880px;width:1px;height:7px;background:#777"></div>
<div class="t" style="left:1586px;top:875px;font-size:17px;color:#555">+</div>
<div class="t" style="left:1612px;top:877px;font-size:15px;color:#555">68%</div>
<svg class="a" style="left:1659px;top:874px" width="20" height="20"><rect x="6" y="6" width="8" height="8" fill="none" stroke="#555" stroke-width="1.3"/><path d="M10 1l-2.5 3h5z M10 19l-2.5-3h5z M1 10l3-2.5v5z M19 10l-3-2.5v5z" fill="#555"/></svg>
<div class="a" style="left:1195px;top:856px;width:109px;height:41px;background:linear-gradient(180deg,#f0dcb8,#e6c89a);border-radius:7px;box-shadow:0 1px 2px rgba(0,0,0,.2)"></div>
<div class="t" style="left:1217px;top:867px;font-size:19px;color:#5a4630">中</div>
<svg class="a" style="left:1252px;top:868px" width="22" height="18"><path d="M6 1l-5 4 3 4 2-1v9h10V8l2 1 3-4-5-4q-3 3-5 0z" fill="#4a3520"/></svg>

</div>
<div id="rpanel" class="a"></div><div class="a" style="left:1696px;top:82px;width:340px;height:190px;border:1.5px solid #1fa055;border-radius:2px;background:#212224;box-shadow:inset 0 0 0 1.5px #3a3b3d"></div><svg class="a" style="left:1820px;top:121px" width="92" height="92"><defs><clipPath id="cp0"><circle cx="46" cy="46" r="46"/></clipPath><linearGradient id="hair" x1="0" y1="0" x2="0" y2="1"><stop offset="0" stop-color="#d0866a"/><stop offset="1" stop-color="#b86448"/></linearGradient></defs><g clip-path="url(#cp0)"><rect width="92" height="92" fill="#eef0f2"/>
<path d="M24 30 Q18 50 22 62 Q28 72 38 70 L40 40 Q36 28 30 26z" fill="url(#hair)"/>
<path d="M56 28 Q70 30 72 50 Q74 64 64 68 L54 66 L54 38z" fill="url(#hair)"/>
<path d="M34 24 Q46 16 58 24 L58 56 Q52 64 46 64 Q38 62 34 54z" fill="#f6e4dc"/>
<rect x="40" y="58" width="14" height="10" fill="#f2dcd2"/>
<ellipse cx="38.5" cy="39" rx="2.6" ry="1.2" fill="#5a4040"/><ellipse cx="53" cy="39" rx="2.6" ry="1.2" fill="#5a4040"/>
<ellipse cx="46.5" cy="51" rx="3" ry="1.6" fill="#d81818"/>
<path d="M10 92 Q14 72 30 68 Q46 63 62 68 Q80 74 84 92z" fill="#8a8aa2"/>
<path d="M40 70 Q50 78 62 70 L66 92 H44z" fill="#7e7896" opacity=".7"/></g></svg><div class="a" style="left:1698px;top:241px;width:174px;height:30px;background:#141517;border-radius:0 3px 0 0"></div><svg class="a" style="left:1700px;top:246px" width="22" height="20"><rect x="1" y="1" width="20" height="13" rx="2" fill="#fff"/><path d="M6 11 Q8 5 14 5 V2 l4 4-4 4 V8 Q10 8 6 11z" fill="#141517"/><rect x="5" y="16" width="12" height="3" rx="1" fill="#fff"/></svg><svg class="a" style="left:1729px;top:245px" width="20" height="24"><rect x="5" y="1" width="10" height="14" rx="5" fill="#4cd137"/><path d="M2 10a8 8 0 0 0 16 0 M10 18v4" fill="none" stroke="#fff" stroke-width="2"/></svg><div class="t" style="left:1757px;top:247px;font-size:17px;color:#f0f0f0">王娟的屏幕共享</div><div class="a" style="left:1697px;top:284px;width:339px;height:190px;border:2px solid rgba(255,255,255,.11);border-radius:4px;background:#212224;background-clip:padding-box"></div><svg class="a" style="left:1820px;top:323px" width="92" height="92"><defs><clipPath id="cp1"><circle cx="46" cy="46" r="46"/></clipPath><linearGradient id="g1" x1="0" y1="0" x2="1" y2="0.3"><stop offset="0" stop-color="#d29088"/><stop offset=".3" stop-color="#c49aa8"/><stop offset="1" stop-color="#a99cc8"/></linearGradient></defs><g clip-path="url(#cp1)"><rect width="92" height="92" fill="url(#g1)"/>
<path d="M26 20 Q40 2 66 4 Q90 14 94 42 L88 58 Q72 62 58 64 L46 40z" fill="#b0a4cc"/>
<path d="M26 20 Q38 6 52 3" fill="none" stroke="#f6f0f6" stroke-width="3"/>
<path d="M24 24 L52 26 L48 46 L40 54 L36 64 L22 62 Q20 42 24 24z" fill="#5a4a70"/>
<path d="M32 34 L46 38 L40 50z" fill="#d0a8b8" opacity=".8"/>
<path d="M56 40 L92 36 M60 50 L90 46" stroke="#6a5c8c" stroke-width="1.6"/><circle cx="62" cy="30" r="5" fill="none" stroke="#6a5c8c" stroke-width="1.6"/>
<path d="M46 70 Q62 62 86 58 L92 66 V92 H44z" fill="#3a3468"/>
<path d="M8 66 Q26 66 40 74 L46 92 H6z" fill="#8a5a68" opacity=".6"/>
<path d="M44 68 L58 82 M50 66 L62 76" stroke="#e8e0f0" stroke-width="1.3"/></g></svg><div class="a" style="left:1699px;top:443px;width:73px;height:29px;background:#141517;border-radius:0 3px 0 0"></div><svg class="a" style="left:1705px;top:446px" width="22" height="24" viewBox="0 0 22 24"><rect x="7" y="1" width="8" height="13" rx="4" fill="#fff"/><path d="M3.5 10a7.5 7.5 0 0 0 15 0 M11 17.5v4 M7 22h8" fill="none" stroke="#fff" stroke-width="1.8"/><line x1="2" y1="21" x2="20" y2="3" stroke="#e8473e" stroke-width="2"/></svg><div class="t" style="left:1735px;top:450px;font-size:16px;color:#f0f0f0">张翼</div><div class="a" style="left:1697px;top:487px;width:339px;height:190px;border:2px solid rgba(255,255,255,.11);border-radius:4px;background:#212224;background-clip:padding-box"></div><svg class="a" style="left:1820px;top:526px" width="92" height="92"><defs><clipPath id="cp2"><circle cx="46" cy="46" r="46"/></clipPath><linearGradient id="g2" x1="0" y1="0" x2="0" y2="1"><stop offset="0" stop-color="#2f4f9e"/><stop offset=".35" stop-color="#4468b0"/><stop offset=".58" stop-color="#8a8cb0"/><stop offset=".72" stop-color="#9a7a88"/><stop offset="1" stop-color="#6a4a3a"/></linearGradient></defs><g clip-path="url(#cp2)"><rect width="92" height="92" fill="url(#g2)"/>
<rect x="43" y="8" width="8" height="84" fill="#6a5058"/><rect x="44" y="6" width="6" height="8" fill="#d060b8"/>
<rect x="57" y="44" width="7" height="48" fill="#a08070"/><path d="M57 46 L60.5 38 L64 46z" fill="#f4f4f4"/>
<rect x="72" y="28" width="8" height="64" fill="#4a7ad0"/><rect x="72" y="58" width="8" height="34" fill="#d8c070"/>
<rect x="34" y="54" width="3" height="38" fill="#d8d0e8"/>
<path d="M0 72 L14 66 L26 70 L34 62 L92 74 V92 H0z" fill="#a07840"/>
<g fill="#f0c060"><rect x="14" y="76" width="8" height="6"/><rect x="28" y="72" width="6" height="10"/><rect x="52" y="80" width="10" height="6"/><rect x="64" y="76" width="6" height="8"/><rect x="40" y="84" width="6" height="8"/></g></g></svg><div class="a" style="left:1699px;top:646px;width:89px;height:29px;background:#141517;border-radius:0 3px 0 0"></div><svg class="a" style="left:1705px;top:649px" width="22" height="24" viewBox="0 0 22 24"><rect x="7" y="1" width="8" height="13" rx="4" fill="#fff"/><path d="M3.5 10a7.5 7.5 0 0 0 15 0 M11 17.5v4 M7 22h8" fill="none" stroke="#fff" stroke-width="1.8"/><line x1="2" y1="21" x2="20" y2="3" stroke="#e8473e" stroke-width="2"/></svg><div class="t" style="left:1735px;top:653px;font-size:16px;color:#f0f0f0">谢永栋</div><div class="a" style="left:1697px;top:689px;width:339px;height:190px;border:2px solid rgba(255,255,255,.11);border-radius:4px;background:#212224;background-clip:padding-box"></div><svg class="a" style="left:1820px;top:728px" width="92" height="92"><defs><clipPath id="cp3"><circle cx="46" cy="46" r="46"/></clipPath><linearGradient id="g3" x1="0" y1="0" x2="0" y2="1"><stop offset="0" stop-color="#2246b8"/><stop offset=".3" stop-color="#3468d8"/><stop offset=".45" stop-color="#5a98f0"/><stop offset=".5" stop-color="#98c0f0"/><stop offset=".53" stop-color="#b0a0a0"/><stop offset=".58" stop-color="#8a7a80"/><stop offset=".62" stop-color="#6a98e0"/><stop offset=".75" stop-color="#3a68c0"/><stop offset=".88" stop-color="#24407a"/><stop offset="1" stop-color="#1a2840"/></linearGradient></defs><g clip-path="url(#cp3)"><rect width="92" height="92" fill="url(#g3)"/>
<path d="M0 42 h6 v-4 h5 v6 h6 v4 L40 56 L0 64z" fill="#9a8a88" opacity=".8"/></g></svg><div class="a" style="left:1699px;top:848px;width:30px;height:29px;background:#f5821f"></div><svg class="a" style="left:1702px;top:852px" width="22" height="22"><circle cx="11" cy="7" r="4.5" fill="#fff"/><path d="M2 20 Q3 12 11 12 Q19 12 20 20z" fill="#fff"/></svg><div class="a" style="left:1729px;top:848px;width:89px;height:29px;background:#141517;border-radius:0 3px 0 0"></div><svg class="a" style="left:1735px;top:851px" width="22" height="24" viewBox="0 0 22 24"><rect x="7" y="1" width="8" height="13" rx="4" fill="#fff"/><path d="M3.5 10a7.5 7.5 0 0 0 15 0 M11 17.5v4 M7 22h8" fill="none" stroke="#fff" stroke-width="1.8"/><line x1="2" y1="21" x2="20" y2="3" stroke="#e8473e" stroke-width="2"/></svg><div class="t" style="left:1765px;top:855px;font-size:16px;color:#f0f0f0">王绍源</div><div class="a" style="left:1697px;top:892px;width:339px;height:190px;border:2px solid rgba(255,255,255,.11);border-radius:4px;background:#212224;background-clip:padding-box"></div><svg class="a" style="left:1820px;top:931px" width="92" height="92"><defs><clipPath id="cp4"><circle cx="46" cy="46" r="46"/></clipPath><linearGradient id="g4" x1="0" y1="0" x2="1" y2="1"><stop offset="0" stop-color="#7898d0"/><stop offset=".5" stop-color="#c0cce0"/><stop offset=".8" stop-color="#e8e8ee"/></linearGradient><linearGradient id="g4b" x1="0" y1="0" x2="0" y2="1"><stop offset="0" stop-color="#8a88a8"/><stop offset=".4" stop-color="#5a6a80"/><stop offset="1" stop-color="#263240"/></linearGradient></defs><g clip-path="url(#cp4)"><rect width="92" height="92" fill="url(#g4)"/>
<path d="M0 46 Q16 44 30 50 Q46 44 62 46 Q78 44 92 48 V92 H0z" fill="url(#g4b)"/>
<path d="M70 92 Q72 66 92 50 V92z" fill="#38485a" opacity=".8"/></g></svg><div class="a" style="left:1699px;top:1051px;width:89px;height:29px;background:#141517;border-radius:0 3px 0 0"></div><svg class="a" style="left:1705px;top:1054px" width="22" height="24" viewBox="0 0 22 24"><rect x="7" y="1" width="8" height="13" rx="4" fill="#fff"/><path d="M3.5 10a7.5 7.5 0 0 0 15 0 M11 17.5v4 M7 22h8" fill="none" stroke="#fff" stroke-width="1.8"/><line x1="2" y1="21" x2="20" y2="3" stroke="#e8473e" stroke-width="2"/></svg><div class="t" style="left:1735px;top:1058px;font-size:16px;color:#f0f0f0">徐朝卫</div><div class="a" style="left:1697px;top:1094px;width:339px;height:190px;border:2px solid rgba(255,255,255,.11);border-radius:4px;background:#212224;background-clip:padding-box"></div><svg class="a" style="left:1820px;top:1133px" width="92" height="92"><defs><clipPath id="cp5"><circle cx="46" cy="46" r="46"/></clipPath><linearGradient id="g5" x1="0" y1="0" x2="0" y2="1"><stop offset="0" stop-color="#7aa8e0"/><stop offset=".4" stop-color="#a0c4e8"/><stop offset=".5" stop-color="#9a80a8"/><stop offset=".7" stop-color="#8a5a8a"/><stop offset="1" stop-color="#5a7040"/></linearGradient></defs><g clip-path="url(#cp5)"><rect width="92" height="92" fill="url(#g5)"/>
<path d="M14 46 V30 l4 -12 4 12 V46z M30 46 V26 l4 -14 4 14 V46z M46 46 V20 l5 -16 5 16 V46z M62 46 V28 l4 -12 4 12 V46z M76 46 V32 l3 -10 3 10 V46z" fill="#e0f0f6"/>
<rect x="12" y="36" width="70" height="12" fill="#d8e6ee"/>
<path d="M26 56 Q46 44 70 54 Q60 62 46 62 Q32 62 26 56z" fill="#c848d0"/><circle cx="48" cy="60" r="5" fill="#2a1a20"/>
<g fill="#8a3a8a" opacity=".8"><circle cx="10" cy="62" r="6"/><circle cx="80" cy="64" r="6"/><circle cx="24" cy="76" r="5"/><circle cx="66" cy="80" r="5"/><circle cx="42" cy="84" r="4"/></g>
<path d="M0 20 Q8 30 6 48 M86 22 Q82 36 88 50" stroke="#4a5a3a" stroke-width="3" fill="none"/></g></svg><div class="a" style="left:1699px;top:1253px;width:99px;height:29px;background:#141517;border-radius:0 3px 0 0"></div><svg class="a" style="left:1705px;top:1256px" width="22" height="24" viewBox="0 0 22 24"><rect x="7" y="1" width="8" height="13" rx="4" fill="#fff"/><path d="M3.5 10a7.5 7.5 0 0 0 15 0 M11 17.5v4 M7 22h8" fill="none" stroke="#fff" stroke-width="1.8"/><line x1="2" y1="21" x2="20" y2="3" stroke="#e8473e" stroke-width="2"/></svg><div class="t" style="left:1735px;top:1260px;font-size:16px;color:#f0f0f0">mxj晓娟</div><div class="a" style="left:1650px;top:99px;width:359px;height:53px;background:#2a2d30;border-radius:0 6px 6px 0"></div><svg class="a" style="left:1660px;top:114px" width="22" height="24" viewBox="0 0 22 24"><rect x="7" y="1" width="8" height="13" rx="4" fill="#9c9ea2"/><path d="M3.5 10a7.5 7.5 0 0 0 15 0 M11 17.5v4 M7 22h8" fill="none" stroke="#9c9ea2" stroke-width="1.8"/><line x1="2" y1="21" x2="20" y2="3" stroke="#e8473e" stroke-width="2"/></svg><div class="a" style="left:1697px;top:111px;width:2px;height:29px;background:#111"></div><div class="t" style="left:1711px;top:116px;font-size:19px;color:#fff">正在讲话: 王娟;</div><svg class="a" style="left:1910px;top:100px" width="100" height="50"><path d="M13 30 Q11 33 14 36 L23.5 43 L46 19 L34 8z" fill="#45474b"/><path d="M35 31 L57 10 L80 30 L70 43 L58 32 L46 43z" fill="#404246"/></svg><div class="a" style="left:2034px;top:1232px;width:9px;height:78px;border-radius:5px;background:#2a3038;border:1px solid #3a4048"></div><div class="a" style="left:2036px;top:1246px;width:5px;height:62px;background:#d42a1a"></div><div class="a" style="left:2031px;top:1297px;width:15px;height:15px;border-radius:50%;background:#e03a1e;border:2px solid #3a4048"></div>
<div id="task" class="a"></div><div class="a" style="left:0;top:1285px;width:204px;height:35px;background:#17181a;border-radius:0 5px 0 0"></div><svg class="a" style="left:1px;top:1292px" width="22" height="22"><rect x="1" y="1" width="20" height="14" rx="2" fill="#fff"/><path d="M6 12 Q8 6 14 6 V3 l4 4-4 4 V9 Q10 9 6 12z" fill="#17181a"/><rect x="5" y="17" width="12" height="3" rx="1" fill="#fff"/></svg><svg class="a" style="left:29px;top:1290px" width="20" height="26"><rect x="5" y="1" width="10" height="15" rx="5" fill="#4cd137"/><path d="M2 11a8 8 0 0 0 16 0 M10 19v5" fill="none" stroke="#fff" stroke-width="2"/></svg><div class="t" style="left:57px;top:1293px;font-size:20px;color:#fff">王娟的屏幕共享</div><svg class="a" style="left:14px;top:1330px" width="26" height="26"><g fill="#fff"><path d="M0 3.5L10.5 2v10.5H0z"/><path d="M12 1.8L26 0v12.5H12z"/><path d="M0 14h10.5v10.5L0 23z"/><path d="M12 14h14v12l-14-1.8z"/></g></svg><svg class="a" style="left:68px;top:1330px" width="26" height="26"><circle cx="16" cy="10" r="7.5" fill="none" stroke="#fff" stroke-width="2"/><line x1="10.5" y1="15.5" x2="2" y2="24" stroke="#fff" stroke-width="2.2"/></svg><svg class="a" style="left:127px;top:1332px" width="24" height="22"><path d="M1 2h8l2 3h12v16H1z" fill="#f5c342"/><rect x="1" y="7" width="22" height="14" fill="#f8d060"/><rect x="6" y="12" width="12" height="8" fill="#2f7bd6"/></svg><svg class="a" style="left:182px;top:1330px" width="25" height="26"><rect x="0" y="0" width="25" height="26" rx="3" fill="#e0322a"/><path d="M7 21V5h7a5 5 0 0 1 0 10H9" fill="none" stroke="#fff" stroke-width="3"/><text x="13" y="23" font-size="5" fill="#fff">PDF</text></svg><svg class="a" style="left:237px;top:1330px" width="26" height="26"><rect x="8" y="1" width="17" height="24" rx="2" fill="#2b7cd3"/><path d="M11 6h12 M11 11h12 M11 16h12 M11 21h12" stroke="#8ec0f0" stroke-width="1.5"/><rect x="0" y="6" width="14" height="14" rx="1.5" fill="#185abd"/><text x="2" y="17" font-size="10" font-weight="bold" fill="#fff">W</text></svg><div class="a" style="left:278px;top:1320px;width:48px;height:45px;background:rgba(255,255,255,.12)"></div><svg class="a" style="left:294px;top:1330px" width="23" height="23"><rect width="23" height="23" rx="5" fill="#1f7af0"/><path d="M3 15 L8 9 L12 13 L15 9 L20 15 L16 16 L12 12 L8 16z" fill="#fff"/></svg><div class="a" style="left:328px;top:1322px;width:2px;height:43px;background:#3a4650"></div><svg class="a" style="left:348px;top:1330px" width="25" height="24"><rect width="25" height="24" rx="5" fill="#2f86e8"/><path d="M9 7 L4 12 L9 17 M16 7 L21 12 L16 17" fill="none" stroke="#fff" stroke-width="2.4"/><circle cx="12.5" cy="12" r="3" fill="none" stroke="#fff" stroke-width="1.6"/></svg><svg class="a" style="left:403px;top:1328px" width="28" height="28"><text x="3" y="24" font-size="30" font-weight="bold" fill="#3aa8e8" font-family="Liberation Sans">e</text><path d="M3 21 Q-2 28 8 24 Q18 20 26 8 Q30 0 22 3" fill="none" stroke="#f5b82e" stroke-width="2.2"/></svg><div class="a" style="left:174px;top:1362px;width:42px;height:3px;background:#76b9ed"></div><div class="a" style="left:229px;top:1362px;width:42px;height:3px;background:#76b9ed"></div><div class="a" style="left:279px;top:1362px;width:53px;height:3px;background:#76b9ed"></div><div class="a" style="left:340px;top:1362px;width:42px;height:3px;background:#76b9ed"></div><div class="a" style="left:395px;top:1362px;width:42px;height:3px;background:#76b9ed"></div><svg class="a" style="left:1590px;top:1334px" width="20" height="14"><path d="M2 12l8-9 8 9" fill="none" stroke="#fff" stroke-width="1.6"/></svg><svg class="a" style="left:1633px;top:1332px" width="28" height="22"><path d="M3 1v6 M7 1v6 M1 7h8v4a4 4 0 0 1-8 0z M5 15v6" fill="none" stroke="#fff" stroke-width="1.5"/><rect x="10" y="8" width="15" height="11" fill="none" stroke="#fff" stroke-width="1.6"/><rect x="12" y="10" width="10" height="7" fill="#fff"/><rect x="25" y="11" width="2" height="5" fill="#fff"/></svg><svg class="a" style="left:1684px;top:1330px" width="20" height="26"><rect x="5" y="1" width="10" height="16" rx="5" fill="#fff"/><path d="M2 12a8 8 0 0 0 16 0 M10 20v4 M6 24h8" fill="none" stroke="#fff" stroke-width="1.6"/></svg><svg class="a" style="left:1729px;top:1331px" width="28" height="24"><path d="M2 8h5l6-5v18l-6-5H2z" fill="none" stroke="#fff" stroke-width="1.5"/><path d="M16 8q3 4 0 8 M19 5q5 7 0 14" fill="none" stroke="#fff" stroke-width="1.5"/><path d="M22 3q7 9 0 18" fill="none" stroke="#6a7888" stroke-width="1.5"/></svg><svg class="a" style="left:1778px;top:1330px" width="26" height="26"><path d="M10 18 L20 3 L23 5 L13 20 L9 22z" fill="none" stroke="#fff" stroke-width="1.5"/><path d="M4 24 Q2 18 8 18 M16 12 Q22 12 22 16" fill="none" stroke="#fff" stroke-width="1.5"/></svg><div class="t" style="left:1821px;top:1332px;font-size:20px;color:#fff">中</div><svg class="a" style="left:1862px;top:1330px" width="25" height="25"><path d="M3 5 L21 1 L24 19 L5 24z" fill="#ee5a2a"/><text x="7" y="19" font-size="17" font-weight="bold" fill="#fff">S</text></svg><div class="t" style="left:1912px;top:1333px;font-size:20px;color:#fff">18:30</div><svg class="a" style="left:1986px;top:1330px" width="26" height="26"><path d="M1 2h24v17H16l-3 4-3-4H1z" fill="#fff"/><path d="M5 7h16 M5 11h16 M5 15h10" stroke="#1b2944" stroke-width="1.6"/></svg><div class="a" style="left:2040px;top:1322px;width:1px;height:43px;background:#5a6a80"></div><div class="a" style="left:0;top:1090px;width:54px;height:43px;background:rgba(115,115,115,.72);border-radius:0 6px 6px 0"></div><svg class="a" style="left:12px;top:1096px" width="32" height="32"><g fill="#fff"><circle cx="4.5" cy="7" r="1.8"/><circle cx="4.5" cy="16" r="1.8"/><circle cx="4.5" cy="25" r="1.8"/></g><g stroke="#fff" stroke-width="2.4" stroke-linecap="round"><line x1="10" y1="7" x2="27" y2="7"/><line x1="10" y1="16" x2="27" y2="16"/><line x1="10" y1="25" x2="27" y2="25"/></g></svg>
</body></html>
